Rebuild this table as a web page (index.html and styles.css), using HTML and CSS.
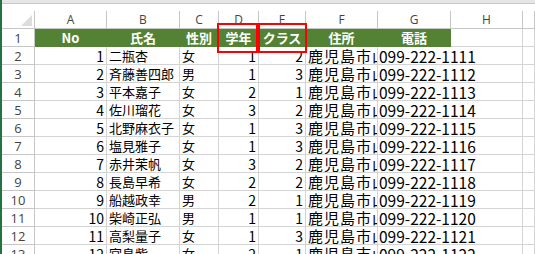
FILE: index.html
```html
<!DOCTYPE html>
<html lang="ja">
<head>
    <meta charset="UTF-8">
    <meta name="viewport" content="width=device-width, initial-scale=1.0">
    <title>名簿</title>
    <link rel="stylesheet" href="styles.css">
</head>
<body>
    <div class="sheet">
        <div class="toolbar-edge"></div>
        <div class="grid" id="grid">
            <div class="corner"></div>
        </div>
        <div class="mark mark-grade"></div>
        <div class="mark mark-class"></div>
    </div>

    <script>
        const columns = ['A', 'B', 'C', 'D', 'E', 'F', 'G', 'H', ''];
        const titles = ['No', '氏名', '性別', '学年', 'クラス', '住所', '電話'];
        const students = [
            ['二瓶杏', '女', 1, 2],
            ['斉藤善四郎', '男', 1, 3],
            ['平本嘉子', '女', 2, 1],
            ['佐川瑠花', '女', 3, 2],
            ['北野麻衣子', '女', 1, 3],
            ['塩見雅子', '女', 1, 3],
            ['赤井茉帆', '女', 3, 2],
            ['長島早希', '女', 2, 2],
            ['船越政幸', '男', 2, 1],
            ['柴崎正弘', '男', 1, 1],
            ['高梨量子', '女', 1, 3],
            ['宮島紫', '女', 2, 1]
        ];

        const grid = document.getElementById('grid');

        function addCell(cls, text) {
            const div = document.createElement('div');
            div.className = 'cell ' + cls;
            if (text !== undefined) div.textContent = text;
            grid.appendChild(div);
            return div;
        }

        columns.forEach(c => addCell('col-head', c));

        // row 1: green title row
        addCell('row-head', 1);
        titles.forEach(t => addCell('title', t));
        addCell('');
        addCell('');

        students.forEach((s, i) => {
            const no = i + 1;
            addCell('row-head', no + 1);
            addCell('num', no);
            addCell('text', s[0]);
            addCell('text', s[1]);
            addCell('num', s[2]);
            addCell('num', s[3]);
            addCell('text addr', '鹿児島市山下町' + no);
            // phone spills over into the empty H column
            addCell('text tel', '099-222-' + (1110 + no));
            addCell('');
            addCell('');
        });
    </script>
</body>
</html>
```

FILE: styles.css
```css
html, body {
    margin: 0;
    height: 100%;
    overflow: hidden;
    background: #fff;
}
.sheet {
    position: relative;
    height: 100%;
    border-left: 2px solid #217346;
    font-family: "Noto Sans CJK JP", sans-serif;
}
.toolbar-edge {
    height: 3px;
    background: #e6e6e6;
    border-bottom: 1px solid #c8c8c8;
    margin-bottom: 7px;
}
.grid {
    display: grid;
    grid-template-columns: 33px 72px 73px 39px 40px 47px 72px 73px 72px 1fr;
    grid-auto-rows: 18px;
}
.cell {
    box-sizing: border-box;
    border-right: 1px solid #d4d4d4;
    border-bottom: 1px solid #d4d4d4;
    display: flex;
    align-items: flex-end;
    white-space: nowrap;
    overflow: hidden;
    font-size: 13px;
    line-height: 16px;
    color: #000;
}
.corner {
    position: relative;
    border-right: 1px solid #c6c6c6;
    border-bottom: 1px solid #c6c6c6;
    background: #fff;
}
.corner::after {
    content: "";
    position: absolute;
    right: 2px;
    bottom: 2px;
    border-left: 11px solid transparent;
    border-bottom: 11px solid #dcdcdc;
}
.col-head, .row-head {
    justify-content: center;
    align-items: center;
    background: #fff;
    color: #444;
    font-family: "Open Sans", "DejaVu Sans", sans-serif;
    font-size: 12px;
    border-color: #c6c6c6;
}
.row-head {
    font-size: 13px;
}
.title {
    background: #548235;
    border-color: #548235;
    color: #fff;
    font-weight: bold;
    justify-content: center;
    align-items: center;
    font-size: 13px;
}
.num {
    justify-content: flex-end;
    padding-right: 2px;
    font-size: 14px;
}
.text {
    padding-left: 2px;
}
.addr {
    font-size: 15px;
    letter-spacing: 1px;
}
.tel {
    font-size: 15.5px;
    padding-left: 1px;
    overflow: visible;
    border-right-color: transparent;
}
.mark {
    position: absolute;
    top: 23px;
    height: 30px;
    box-sizing: border-box;
    border: 2px solid #f00;
}
.mark-grade {
    left: 215px;
    width: 41px;
}
.mark-class {
    left: 256px;
    width: 49px;
}
```
